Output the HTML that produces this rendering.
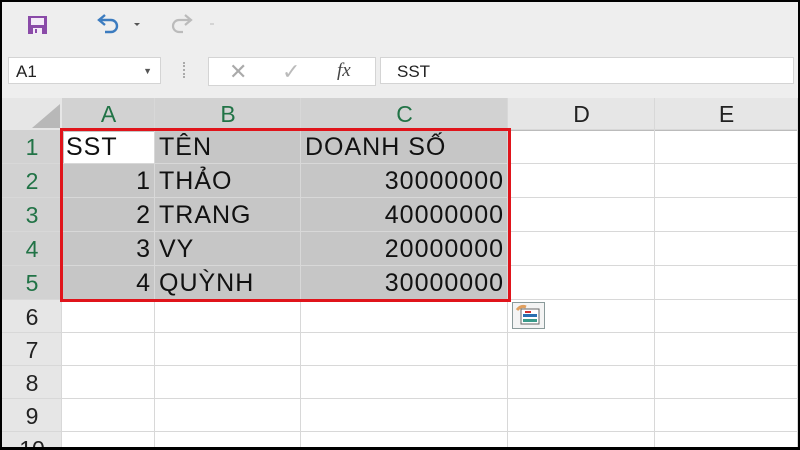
<!DOCTYPE html>
<html><head><style>
body{margin:0;width:800px;height:450px;overflow:hidden;background:#000;font-family:"Liberation Sans",sans-serif;}
#f{position:absolute;left:2px;top:2px;width:796px;height:445px;background:#fff;overflow:hidden}
.tb{position:absolute;left:0;top:0;width:796px;height:96px;background:#eeeeee}
.box{position:absolute;background:#fff;border:1px solid #d4d4d4}
.c{position:absolute;box-sizing:border-box;border-right:1px solid #d8d8d8;border-bottom:1px solid #d8d8d8;font-size:25px;letter-spacing:1px;line-height:35px;color:#111;white-space:nowrap;padding:0 3px 0 4px}
.h{text-align:center;font-size:23px;letter-spacing:0}
</style></head><body><div id="f">
<div class="tb"></div>
<svg style="position:absolute;left:25px;top:13px" width="22" height="20"><rect x="1" y="1" width="19" height="18" fill="#8a4aa8"/><rect x="4" y="3" width="13" height="7" fill="#f3eaf7"/><rect x="6" y="13" width="9" height="6" fill="#f3eaf7"/><rect x="8" y="14" width="2" height="4" fill="#8a4aa8"/></svg>
<svg style="position:absolute;left:94px;top:12px" width="50" height="22"><path d="M5 6 H15 a6 6 0 0 1 0 12 H9" fill="none" stroke="#3b7bbf" stroke-width="2.4"/><path d="M9 1 L3 6 L9 11" fill="none" stroke="#3b7bbf" stroke-width="2.4"/><path d="M38 9 l3 3 l3 -3z" fill="#555"/></svg>
<svg style="position:absolute;left:168px;top:12px" width="50" height="22"><path d="M19 6 H9 a6 6 0 0 0 0 12 H13" fill="none" stroke="#bbb" stroke-width="2.2"/><path d="M15 1 L21 6 L15 11" fill="none" stroke="#bbb" stroke-width="2.2"/><path d="M40 10 h4" stroke="#ccc" stroke-width="1.5"/></svg>
<div class="box" style="left:6px;top:55px;width:153px;height:27px;font-size:17px;line-height:27px;padding-left:7px;box-sizing:border-box;color:#222">A1<span style="position:absolute;right:8px;top:0;font-size:9px;color:#555">▼</span></div>
<div style="position:absolute;left:181px;top:60px;width:2px;height:16px;border-left:2px dotted #aaa"></div>
<div class="box" style="left:206px;top:55px;width:166px;height:27px"><span style="position:absolute;left:20px;top:1px;font-size:22px;color:#aaa">✕</span><span style="position:absolute;left:73px;top:1px;font-size:22px;color:#bbb">✓</span><i style="position:absolute;left:128px;top:2px;font-family:'Liberation Serif';font-size:19px;color:#444">fx</i></div>
<div class="box" style="left:378px;top:55px;width:414px;height:27px;font-size:17px;line-height:27px;padding-left:16px;box-sizing:border-box;color:#222">SST</div>
<div style="position:absolute;left:0;top:96px;width:796px;height:32px;background:#e6e6e6;border-bottom:1px solid #bbb"></div>
<svg style="position:absolute;left:20px;top:100px" width="40" height="28"><path d="M38 2 V26 H10Z" fill="#b8b8b8"/></svg>
<div class="c h" style="left:60px;top:96px;width:93px;height:32px;line-height:33px;background:#d2d2d2;color:#217346">A</div>
<div class="c h" style="left:153px;top:96px;width:146px;height:32px;line-height:33px;background:#d2d2d2;color:#217346">B</div>
<div class="c h" style="left:299px;top:96px;width:207px;height:32px;line-height:33px;background:#d2d2d2;color:#217346">C</div>
<div class="c h" style="left:506px;top:96px;width:147px;height:32px;line-height:33px;color:#222">D</div>
<div class="c h" style="left:653px;top:96px;width:143px;height:32px;line-height:33px;color:#222">E</div>
<div style="position:absolute;left:0;top:128px;width:60px;height:320px;background:#e6e6e6"></div>
<div style="position:absolute;left:0;top:128px;width:60px;height:170px;background:#d2d2d2"></div>
<div style="position:absolute;left:60px;top:128px;width:446px;height:170px;background:#c6c6c6"></div>
<div style="position:absolute;left:62px;top:130px;width:91px;height:32px;background:#fff"></div>
<div id="g"></div>
<script>
var tops=[128,162,196,230,264,298,331,364,397,430],hs=[34,34,34,34,34,33,33,33,33,33];
var cols=[[60,93],[153,146],[299,207],[506,147],[653,143]];
var data=[["SST","TÊN","DOANH SỐ"],["1","THẢO","30000000"],["2","TRANG","40000000"],["3","VY","20000000"],["4","QUỲNH","30000000"]];
var h="";
for(var r=0;r<10;r++){
h+='<div class="c h" style="left:0;top:'+tops[r]+'px;width:60px;height:'+hs[r]+'px;color:'+(r<5?'#217346':'#222')+'">'+(r+1)+'</div>';
for(var c=0;c<5;c++){var t=(r<5&&c<3)?data[r][c]:"";var al=(r>0&&(c==0||c==2))?'right':'left';
h+='<div class="c" style="left:'+cols[c][0]+'px;top:'+tops[r]+'px;width:'+cols[c][1]+'px;height:'+hs[r]+'px;text-align:'+al+'">'+t+'</div>';}
}
document.getElementById('g').innerHTML=h;
</script>
<div style="position:absolute;left:58px;top:126px;width:445px;height:168px;border:3px solid #e0141b"></div>
<svg style="position:absolute;left:510px;top:300px" width="34" height="28"><rect x="0.5" y="0.5" width="32" height="26" fill="#f4f4f4" stroke="#8a9a9a"/><rect x="9" y="7" width="18" height="15" fill="#fff" stroke="#666"/><rect x="11" y="12" width="14" height="3" fill="#2a6fb0"/><rect x="11" y="17" width="14" height="3" fill="#3a9a8a"/><path d="M5 8 q4 -5 9 -3" stroke="#e0a060" stroke-width="3" fill="none"/><rect x="13" y="9" width="6" height="2" fill="#d03030"/></svg>
</div></body></html>
